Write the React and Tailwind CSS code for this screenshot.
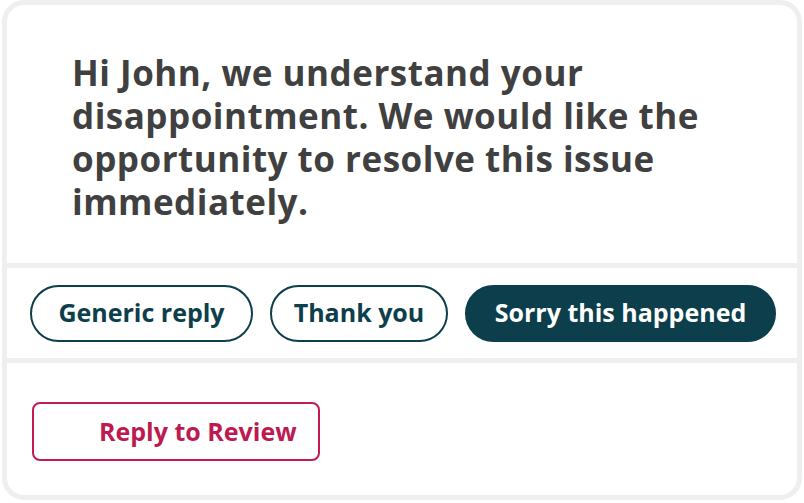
const replies = [
  { label: 'Generic reply', width: 'w-[223px]', active: false },
  { label: 'Thank you', width: 'w-[178px]', active: false },
  { label: 'Sorry this happened', width: 'w-[311px]', active: true },
];

export default function App() {
  return (
    <div className="h-[503px] w-[804px] bg-white font-['Open_Sans',sans-serif]">
      <div className="ml-[2px] flex h-[500px] w-[800px] flex-col gap-[5px] overflow-hidden rounded-[22px] border-[5px] border-[#efefef] bg-[#efefef]">
        <div className="h-[258px] shrink-0 bg-white pl-[65px] pr-[40px] pt-[46px]">
          <p className="max-w-[680px] text-[35px] font-bold leading-[43px] tracking-[0.5px] text-[#404040]">
            Hi John, we understand your disappointment. We would like the opportunity to resolve this issue immediately.
          </p>
        </div>

        <div className="flex h-[90px] shrink-0 items-center gap-[17px] bg-white pl-[23px]">
          {replies.map(({ label, width, active }) => (
            <button
              key={label}
              className={[
                'h-[57px] rounded-full border-2 border-[#0c3e4b] text-center text-[25px] font-bold',
                width,
                active ? 'bg-[#0c3e4b] text-white' : 'bg-white text-[#0c3e4b]',
              ].join(' ')}
            >
              {label}
            </button>
          ))}
        </div>

        <div className="flex-1 bg-white pl-[25px] pt-[39px]">
          <button className="h-[59px] w-[288px] rounded-[8px] border-2 border-[#c21a55] pl-[65px] text-left text-[25px] font-bold text-[#bd1a52]">
            Reply to Review
          </button>
        </div>
      </div>
    </div>
  );
}
